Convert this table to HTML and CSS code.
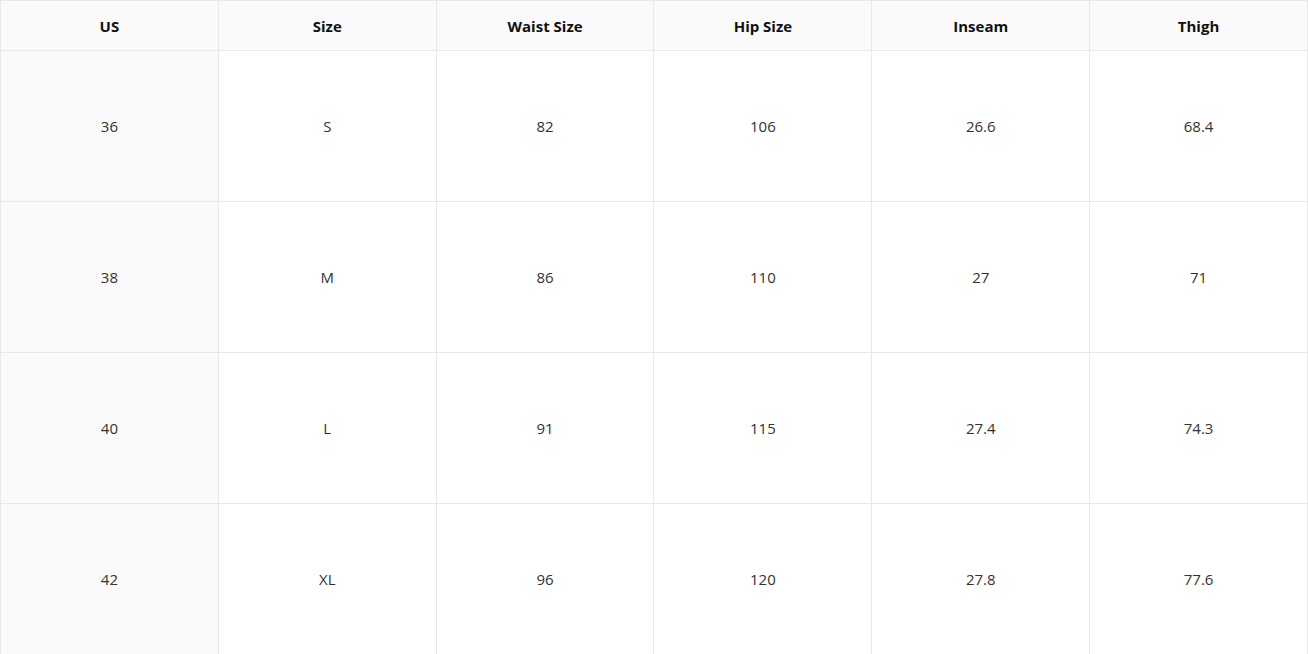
FILE: index.html
```html
<!DOCTYPE html>
<html>
<head>
<meta charset="utf-8">
<link rel="stylesheet" href="styles.css">
</head>
<body>
<table class="size-table">
  <thead>
    <tr class="head-row">
      <th>US</th><th>Size</th><th>Waist Size</th><th>Hip Size</th><th>Inseam</th><th>Thigh</th>
    </tr>
  </thead>
  <tbody>
    <tr class="data-row"><td class="first">36</td><td>S</td><td>82</td><td>106</td><td>26.6</td><td>68.4</td></tr>
    <tr class="data-row"><td class="first">38</td><td>M</td><td>86</td><td>110</td><td>27</td><td>71</td></tr>
    <tr class="data-row"><td class="first">40</td><td>L</td><td>91</td><td>115</td><td>27.4</td><td>74.3</td></tr>
    <tr class="data-row"><td class="first">42</td><td>XL</td><td>96</td><td>120</td><td>27.8</td><td>77.6</td></tr>
  </tbody>
</table>
</body>
</html>
```
FILE: styles.css
```css
html, body {
  margin: 0;
  padding: 0;
  background: #ffffff;
}
body {
  font-family: "Open Sans", "Noto Sans", sans-serif;
  font-size: 15px;
  color: #333333;
}
.size-table {
  width: 1308px;
  border-collapse: collapse;
  table-layout: fixed;
}
.size-table th,
.size-table td {
  border: 1px solid #e8e8e8;
  text-align: center;
  vertical-align: middle;
  padding: 0;
}
.head-row th {
  height: 49px;
  background: #fafafa;
  color: #111111;
  font-weight: 700;
  font-size: 15px;
}
.data-row td {
  height: 150px;
}
.data-row td.first {
  background: #fafafa;
}
```
